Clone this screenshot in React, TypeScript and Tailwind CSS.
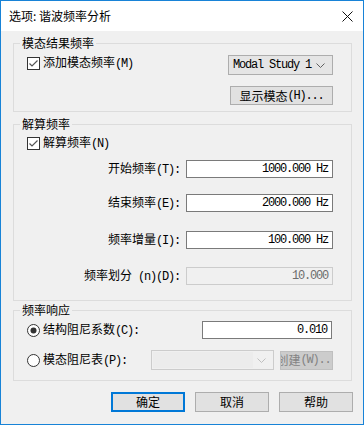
import type { ReactNode } from 'react';

// ASCII runs get a narrow mono face (SimSun-like half width), CJK stays in Noto
const Mixed = ({ s }: { s: string }) => {
  const parts = s.split(/([\x20-\x7e]+)/);
  return (
    <>
      {parts.map((p, i) =>
        p === '' ? null : /[\x20-\x7e]/.test(p) ? (
          <span key={i} className="font-['Liberation_Mono',monospace] tracking-[-1.2px] whitespace-pre">
            {p}
          </span>
        ) : (
          <span key={i}>{p}</span>
        )
      )}
    </>
  );
};

const CheckBox = () => (
  <svg width="13" height="13" viewBox="0 0 13 13" className="shrink-0">
    <rect x="0.5" y="0.5" width="12" height="12" fill="#fff" stroke="#333" />
    <path d="M2.5 6.5 L5 9 L10.5 3.5" fill="none" stroke="#555" strokeWidth="1.2" />
  </svg>
);

const Radio = ({ checked }: { checked?: boolean }) => (
  <svg width="13" height="13" viewBox="0 0 13 13" className="shrink-0">
    <circle cx="6.5" cy="6.5" r="6" fill="#fff" stroke="#333" />
    {checked && <circle cx="6.5" cy="6.5" r="3" fill="#333" />}
  </svg>
);

const Chevron = ({ color }: { color: string }) => (
  <svg width="9" height="5" viewBox="0 0 9 5">
    <path d="M0.5 0.5 L4.5 4.5 L8.5 0.5" fill="none" stroke={color} />
  </svg>
);

const Group = ({ title, className, children }: { title: string; className: string; children: ReactNode }) => (
  <fieldset className={`w-[339px] border border-[#dcdcdc] ${className}`}>
    <legend className="ml-[6px] px-[2px] leading-[14px]">{title}</legend>
    {children}
  </fieldset>
);

const Field = ({ label, value, disabled, top }: { label: string; value: string; disabled?: boolean; top: string }) => (
  <div className={`flex items-center h-[18px] ${top}`}>
    <div className="w-[166px] text-right leading-[14px]">
      <Mixed s={label} />
    </div>
    <div
      className={`ml-[6px] w-[147px] h-[18px] border flex items-center justify-end pr-[4px] leading-[14px] ${
        disabled ? 'border-[#cccccc] bg-[#f0f0f0] text-[#6d6d6d]' : 'border-[#7a7a7a] bg-white'
      }`}
    >
      <Mixed s={value} />
    </div>
  </div>
);

const Button = ({ label, primary }: { label: string; primary?: boolean }) => (
  <div
    className={`w-[74px] h-[20px] flex items-center justify-center bg-[#e1e1e1] leading-[14px] ${
      primary ? 'border-2 border-[#0078d7]' : 'border border-[#adadad]'
    }`}
  >
    {label}
  </div>
);

export default function App() {
  return (
    <div className="w-[364px] h-[425px] border border-[#1883d7] bg-[#f0f0f0] flex flex-col font-['Noto_Sans_CJK_SC',sans-serif] text-[12px] leading-[14px] text-black">
      {/* title bar */}
      <div className="h-[30px] bg-white flex items-center justify-between pl-[8px] pr-[10px] shrink-0">
        <span className="leading-[16px]">选项: 谐波频率分析</span>
        <svg width="11" height="11" viewBox="0 0 11 11">
          <path d="M0.5 0.5 L10.5 10.5 M10.5 0.5 L0.5 10.5" stroke="#111" strokeWidth="1" />
        </svg>
      </div>

      <div className="flex flex-col pl-[12px]">
        <Group title="模态结果频率" className="mt-[5px] pb-[6px]">
          <div className="pt-[5px] pl-[13px] pr-[18px]">
            <div className="flex justify-between h-[20px]">
              <div className="flex items-center gap-[3px] h-[14px] mt-[1px]">
                <CheckBox />
                <span>
                  <Mixed s="添加模态频率(M)" />
                </span>
              </div>
              <div className="w-[105px] h-[20px] border border-[#adadad] bg-[#e5e5e5] flex items-center justify-between pl-[4px] pr-[7px]">
                <Mixed s="Modal Study 1" />
                <Chevron color="#606060" />
              </div>
            </div>
            <div className="flex justify-end mt-[11px]">
              <div className="w-[103px] h-[19px] border border-[#adadad] bg-[#e1e1e1] flex items-center justify-center">
                <Mixed s="显示模态(H)..." />
              </div>
            </div>
          </div>
        </Group>

        <Group title="解算频率" className="mt-[5px] pb-[15px]">
          <div className="pt-[5px]">
            <div className="flex items-center gap-[3px] h-[14px] pl-[13px]">
              <CheckBox />
              <span>
                <Mixed s="解算频率(N)" />
              </span>
            </div>
            <Field label="开始频率(T):" value="1000.000 Hz" top="mt-[10px]" />
            <Field label="结束频率(E):" value="2000.000 Hz" top="mt-[16px]" />
            <Field label="频率增量(I):" value="100.000 Hz" top="mt-[19px]" />
            <Field label="频率划分 (n)(D):" value="10.000" disabled top="mt-[18px]" />
          </div>
        </Group>

        <Group title="频率响应" className="mt-[2px] pb-[10px]">
          <div className="pt-[4px] pl-[13px] pr-[18px]">
            <div className="flex items-center justify-between h-[18px]">
              <div className="flex items-center gap-[3px]">
                <Radio checked />
                <span>
                  <Mixed s="结构阻尼系数(C):" />
                </span>
              </div>
              <div className="mr-[1px] w-[130px] h-[18px] border border-[#7a7a7a] bg-white flex items-center justify-end pr-[4px]">
                <Mixed s="0.010" />
              </div>
            </div>
            <div className="flex items-center h-[20px] mt-[11px]">
              <div className="w-[124px] flex items-center gap-[3px]">
                <Radio />
                <span>
                  <Mixed s="模态阻尼表(P):" />
                </span>
              </div>
              <div className="w-[123px] h-[20px] border border-[#cccccc] bg-[#f0f0f0] flex items-center justify-between pl-[1px] pr-[7px]">
                <div className="w-[100px] h-[16px] bg-[#ececec]" />
                <Chevron color="#bfbfbf" />
              </div>
              <div className="ml-[6px] w-[53px] h-[19px] border border-[#bfbfbf] bg-[#cccccc] text-[#838383] flex items-center justify-center overflow-hidden whitespace-nowrap">
                <Mixed s="创建(W)..." />
              </div>
            </div>
          </div>
        </Group>

        <div className="w-[340px] flex justify-end gap-[10px] mt-[11px]">
          <Button label="确定" primary />
          <Button label="取消" />
          <Button label="帮助" />
        </div>
      </div>
    </div>
  );
}
